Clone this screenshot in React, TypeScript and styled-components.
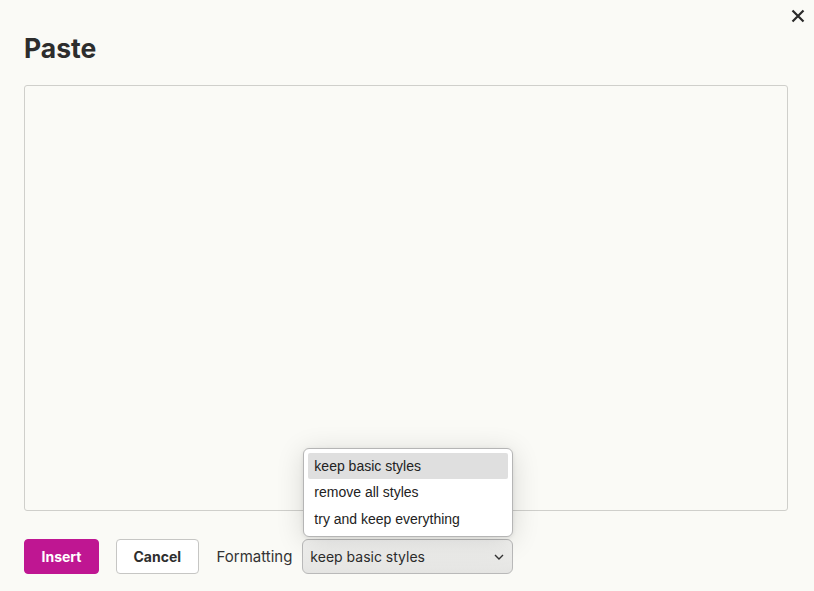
import React from "react";
import styled, { createGlobalStyle } from "styled-components";

const Global = createGlobalStyle`
  html, body { margin: 0; padding: 0; background: #fafaf6; }
  body { font-family: Inter, "Noto Sans", sans-serif; color: #2e2e2e; }
  * { box-sizing: border-box; }
`;

const Dialog = styled.div`
  position: relative;
  width: 814px;
  height: 591px;
  padding: 0 26px 0 24px;
  display: flex;
  flex-direction: column;
  background: #fafaf6;
`;

const CloseButton = styled.button`
  position: absolute;
  top: 7px;
  right: 7px;
  width: 18px;
  height: 18px;
  padding: 0;
  border: 0;
  background: none;
  display: flex;
  align-items: center;
  justify-content: center;
  color: #2a2a2a;
`;

const Title = styled.h1`
  margin: 30px 0 0;
  font-size: 26.5px;
  line-height: 36px;
  font-weight: 700;
  color: #2d2d2d;
`;

const PasteArea = styled.div`
  margin-top: 19px;
  height: 426px;
  border: 1px solid #cfcfcb;
  border-radius: 3px;
  background: #fafaf6;
`;

const Footer = styled.div`
  margin-top: 28px;
  display: flex;
  align-items: center;
  height: 35px;
`;

const Button = styled.button<{ $primary?: boolean }>`
  height: 35px;
  padding: 0 16.5px;
  border-radius: 4px;
  font-family: Inter, "Noto Sans", sans-serif;
  font-size: 14px;
  font-weight: 700;
  cursor: pointer;
  border: 1px solid ${(p) => (p.$primary ? "#bf1692" : "#c6c6c4")};
  background: ${(p) => (p.$primary ? "#bf1692" : "#ffffff")};
  color: ${(p) => (p.$primary ? "#ffffff" : "#2e2e2e")};
  margin-right: ${(p) => (p.$primary ? "17px" : "18px")};
`;

const Label = styled.span`
  font-size: 15px;
  color: #333;
  margin-right: 10px;
`;

const SelectWrap = styled.div`
  position: relative;
`;

const SelectBox = styled.div`
  width: 211px;
  height: 35px;
  border: 1px solid #b9b9b9;
  border-radius: 6px;
  background: linear-gradient(#f3f3f1, #e4e4e2);
  display: flex;
  align-items: center;
  justify-content: space-between;
  padding: 0 8px 0 7px;
  font-size: 14px;
  color: #2c2c2c;
`;

const Menu = styled.ul`
  position: absolute;
  left: 1px;
  bottom: 37px;
  width: 210px;
  margin: 0;
  padding: 4px 4px;
  list-style: none;
  background: #ffffff;
  border: 1px solid #b5b5b5;
  border-radius: 6px;
  box-shadow: 0 4px 28px rgba(0, 0, 0, 0.14), 0 1px 4px rgba(0, 0, 0, 0.08);
`;

const Option = styled.li<{ $active?: boolean }>`
  height: 26.5px;
  display: flex;
  align-items: center;
  padding: 0 6px;
  font-family: "Liberation Sans", Arial, sans-serif;
  font-size: 14px;
  color: #222;
  border-radius: 2px;
  background: ${(p) => (p.$active ? "#dfdfdf" : "transparent")};
`;

const options = ["keep basic styles", "remove all styles", "try and keep everything"];

export default function App() {
  return (
    <>
      <Global />
      <Dialog>
        <CloseButton aria-label="Close">
          <svg width="14" height="14" viewBox="0 0 14 14">
            <path d="M1.5 1.5 L12.5 12.5 M12.5 1.5 L1.5 12.5" stroke="currentColor" strokeWidth="2.2" />
          </svg>
        </CloseButton>
        <Title>Paste</Title>
        <PasteArea />
        <Footer>
          <Button $primary>Insert</Button>
          <Button>Cancel</Button>
          <Label>Formatting</Label>
          <SelectWrap>
            <Menu>
              {options.map((o, i) => (
                <Option key={o} $active={i === 0}>
                  {o}
                </Option>
              ))}
            </Menu>
            <SelectBox>
              <span>keep basic styles</span>
              <svg width="10" height="6" viewBox="0 0 10 6">
                <path d="M1 1 L5 5 L9 1" fill="none" stroke="#333" strokeWidth="1.4" />
              </svg>
            </SelectBox>
          </SelectWrap>
        </Footer>
      </Dialog>
    </>
  );
}
